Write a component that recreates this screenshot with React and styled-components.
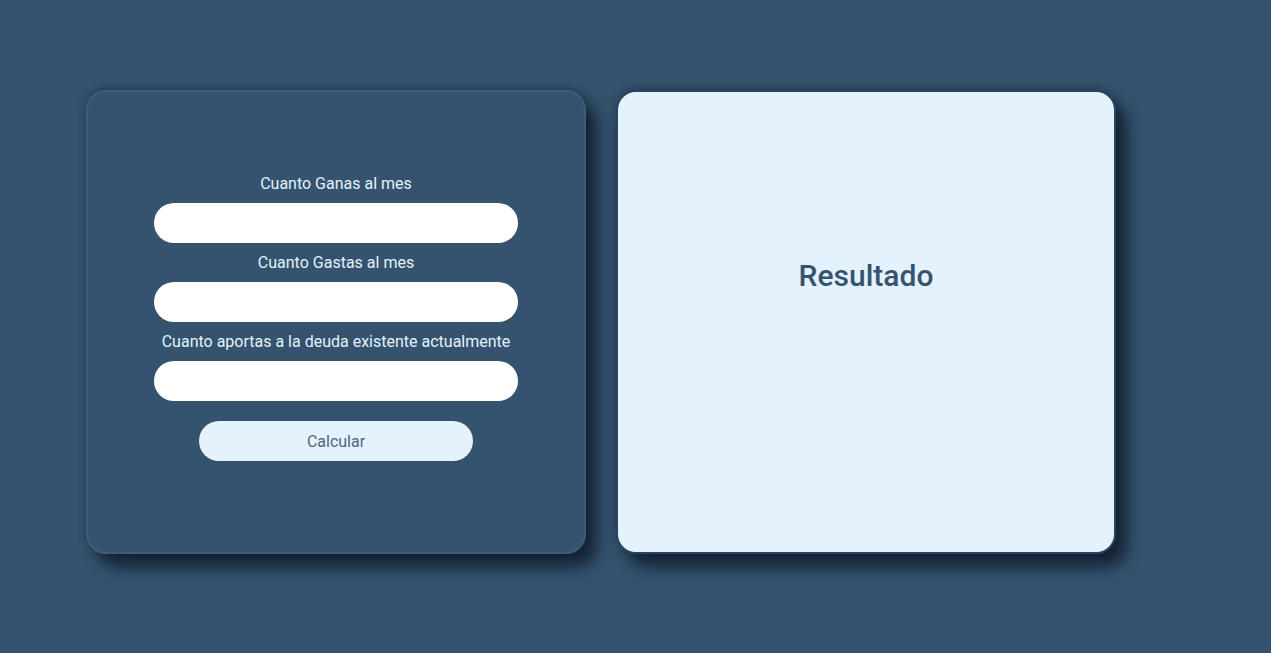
import React from "react";
import styled, { createGlobalStyle } from "styled-components";

const GlobalStyle = createGlobalStyle`
  * {
    box-sizing: border-box;
  }

  body {
    margin: 0;
    background-color: #35536e;
    font-family: Roboto, "Liberation Sans", sans-serif;
  }
`;

const fields = [
  "Cuanto Ganas al mes",
  "Cuanto Gastas al mes",
  "Cuanto aportas a la deuda existente actualmente",
];

const App = () => {
  return (
    <>
      <GlobalStyle />
      <StyledPage>
        <StyledFormCard>
          <StyledForm onSubmit={(e) => e.preventDefault()}>
            {fields.map((label) => (
              <StyledField key={label}>
                <StyledLabel>{label}</StyledLabel>
                <StyledInput type="text" />
              </StyledField>
            ))}
            <StyledButton type="submit">Calcular</StyledButton>
          </StyledForm>
        </StyledFormCard>
        <StyledResultCard>
          <StyledResultTitle>Resultado</StyledResultTitle>
        </StyledResultCard>
      </StyledPage>
    </>
  );
};

const StyledPage = styled.div`
  display: flex;
  gap: 30px;
  min-height: 653px;
  padding: 90px 0 0 86px;
`;

const StyledCard = styled.div`
  width: 500px;
  height: 464px;
  border-radius: 20px;
  box-shadow: 11px 13px 16px rgba(8, 18, 32, 0.72), 0 -2px 10px rgba(8, 18, 32, 0.3);
`;

const StyledFormCard = styled(StyledCard)`
  display: flex;
  justify-content: center;
  align-items: center;
  padding-bottom: 10px;
  background-color: #35536e;
  border: 2px solid #3e5c78;
`;

const StyledForm = styled.form`
  display: flex;
  flex-direction: column;
  align-items: center;
  gap: 10px;
`;

const StyledField = styled.div`
  display: flex;
  flex-direction: column;
  align-items: center;
  gap: 10px;
`;

const StyledLabel = styled.label`
  color: #e3f2fd;
  font-size: 16px;
  line-height: 19px;
`;

const StyledInput = styled.input`
  width: 364px;
  height: 40px;
  border: none;
  border-radius: 20px;
  background-color: #ffffff;
  padding: 0 16px;
  font-family: inherit;
  font-size: 16px;
  outline: none;
`;

const StyledButton = styled.button`
  width: 274px;
  height: 40px;
  margin-top: 10px;
  padding: 2px 0 0;
  border: none;
  border-radius: 20px;
  background-color: #e3f2fd;
  color: #4d6680;
  font-family: inherit;
  font-size: 16px;
  cursor: pointer;
`;

const StyledResultCard = styled(StyledCard)`
  display: flex;
  justify-content: center;
  align-items: flex-start;
  padding-top: 166px;
  background-color: #e3f2fd;
  border: 2px solid #2a4560;
`;

const StyledResultTitle = styled.h2`
  margin: 0;
  color: #35536e;
  font-size: 30px;
  font-weight: 500;
  line-height: 36px;
`;

export default App;
